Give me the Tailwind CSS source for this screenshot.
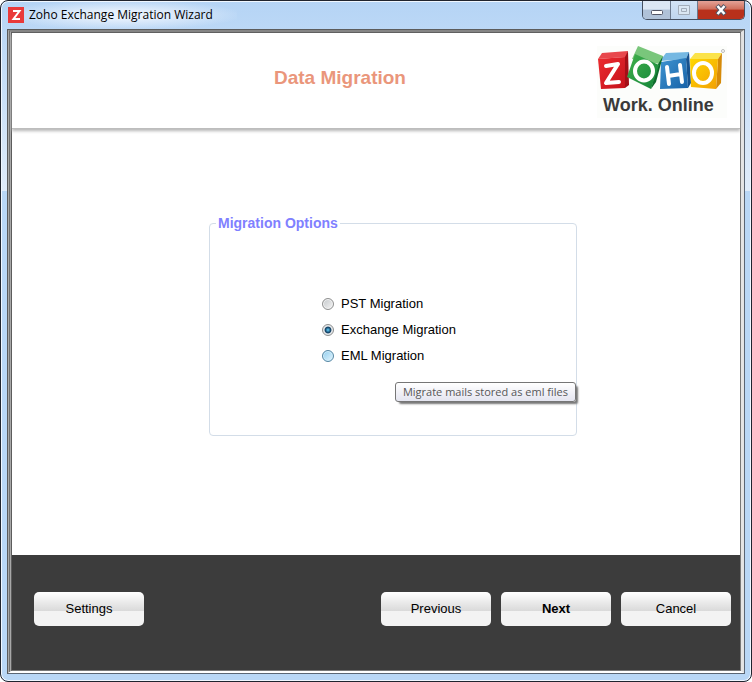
<!DOCTYPE html>
<html lang="en">
<head>
    <meta charset="UTF-8">
    <meta name="viewport" content="width=device-width, initial-scale=1.0">
    <title>Zoho Exchange Migration Wizard</title>
    <script src="https://cdn.jsdelivr.net/npm/@tailwindcss/browser@4"></script>
</head>
<body class="bg-white font-['Liberation_Sans',Arial,sans-serif] text-[13px] text-black">
    <div class="min-h-screen flex flex-col rounded-lg border border-[#20242e] bg-[#b9d7f6] bg-linear-to-b from-[#b5d4f5] from-0% via-[#e0ecfa] via-28% to-[#b9d7f6] to-28% px-[6px] pb-[7px] shadow-[inset_0_0_0_1px_#f0f7ff]">

        <!-- Title bar -->
        <div class="h-7 flex items-start justify-between">
            <div class="h-7 flex items-center gap-[5px] pl-px pr-6 bg-radial from-[#e6f0fc] from-20% to-transparent to-75%">
                <svg class="w-4 h-4" viewBox="0 0 16 16" aria-hidden="true">
                    <rect width="16" height="16" fill="#e93a3a"/>
                    <path d="M5 4h6.500L5.500 12H12" fill="none" stroke="#fff" stroke-width="2"/>
                </svg>
                <h1 class="font-['Open_Sans','Noto_Sans',sans-serif] text-[12px] leading-4">Zoho Exchange Migration Wizard</h1>
            </div>
            <div class="flex h-[19px] rounded-b-[5px] border border-t-0 border-[#454f60] overflow-hidden">
                <button aria-label="Minimize" class="w-7 border-r border-[#6c7a8e] bg-linear-to-b from-[#dce7f4] from-45% to-[#b0c2d8] to-50% flex items-center justify-center">
                    <svg class="w-3 h-5" viewBox="0 0 12 20"><rect x=".5" y="10.500" width="11" height="4" rx="1" fill="#fff" stroke="#535666"/></svg>
                </button>
                <button aria-label="Maximize" disabled class="w-[27px] border-r border-[#6c7a8e] bg-linear-to-b from-[#d3e3f5] to-[#bfd5ee] flex items-center justify-center">
                    <svg class="w-3 h-5" viewBox="0 0 12 20"><path d="M.5 5.500h11v9H.5zM3.500 8.500h5v3h-5z" fill="#dbe7f3" stroke="#a3adba"/></svg>
                </button>
                <button aria-label="Close" class="w-[46px] bg-linear-to-b from-[#e3a297] from-0% via-[#cf6f5c] via-45% to-[#b8301b] to-50% flex items-center justify-center">
                    <svg class="w-3 h-5" viewBox="0 0 12 20"><path d="M2 5.500l8 9M10 5.500l-8 9" stroke="#535666" stroke-width="4.500"/><path d="M2.500 6l7 8M9.500 6l-7 8" stroke="#fff" stroke-width="2.500"/></svg>
                </button>
            </div>
        </div>

        <!-- Bevelled client area -->
        <div class="flex-1 flex flex-col border border-t-[#5c5c5c] border-l-[#5c5c5c] border-r-[#5b6674] border-b-[#5b6674]">
            <div class="flex-1 flex flex-col border-x-3 border-y-2 [border-left-style:double] bg-[#707070] border-t-[#858585] border-l-[#a8a8a8] border-r-[#e4e4e4] border-b-white">
                <div class="flex-1 flex flex-col border border-t-[#5c5c5c] border-l-[#5c5c5c] border-r-[#777] border-b-[#777]">

                    <header class="relative z-10 h-24 flex items-start justify-between pl-[262px] pr-[13px] bg-white border-b border-[#bdbdbd] shadow-[0_2px_3px_#b5b5b5]">
                        <h2 class="pt-[33px] text-[19px] leading-6 font-bold text-[#ea967b]">Data Migration</h2>
                        <svg class="w-[130px] h-[72px] mt-[13px]" viewBox="0 0 130 72" role="img" aria-label="Zoho - Work. Online" font-family="Liberation Sans, Arial, sans-serif" font-weight="bold">
                            <defs>
                                <linearGradient id="red" x2="1" y2="1"><stop stop-color="#ec2b30"/><stop offset="1" stop-color="#c5121b"/></linearGradient>
                                <linearGradient id="green" x2="1" y2="1"><stop stop-color="#41b14c"/><stop offset="1" stop-color="#128339"/></linearGradient>
                                <linearGradient id="blue" x2="1" y2="1"><stop stop-color="#3f94d0"/><stop offset="1" stop-color="#1762a8"/></linearGradient>
                                <linearGradient id="yellow" x2="1" y2="1"><stop stop-color="#ffd800"/><stop offset="1" stop-color="#f29f05"/></linearGradient>
                            </defs>
                            <rect width="130" height="72" fill="#fcfdfb"/>
                            <!-- red cube -->
                            <path d="M1 13L5 7l26-2-2 6z" fill="#e8474c"/>
                            <path d="M28 11l3-6 1 34-4 3z" fill="#a30f17"/>
                            <path d="M1 13l27-2v31l-24 1z" fill="url(#red)"/>
                            <!-- blue cube -->
                            <path d="M63 15l6-8 23-1-3 7z" fill="#75b8e2"/>
                            <path d="M89 13l3-7 2 31-3 5z" fill="#16528f"/>
                            <path d="M64 16l25-4 2 30-28 1z" fill="url(#blue)"/>
                            <!-- green cube -->
                            <path d="M35 13L41 0l25 10-3 8z" fill="#79c67b"/>
                            <path d="M60 20l6-10-7 26-5 7z" fill="#0e6b2d"/>
                            <path d="M38 8l24 11-8 24-24-12z" fill="url(#green)"/>
                            <!-- yellow cube -->
                            <path d="M93 13l5-6h27l-4 6z" fill="#fbe34a"/>
                            <path d="M121 13l4-6-1 30-5 6z" fill="#d68a08"/>
                            <path d="M93 13h28l-2 30-25-2z" fill="url(#yellow)"/>
                            <path d="M9 20l12-2-12 19 13-1" fill="none" stroke="#fff" stroke-width="4" stroke-linecap="round" stroke-linejoin="round"/>
                            <ellipse cx="47" cy="25" rx="9" ry="9.500" fill="none" stroke="#fff" stroke-width="4"/>
                            <path d="M70 21l2 17M83 19l2 17M71 30l13-2" stroke="#fff" stroke-width="4" stroke-linecap="round"/>
                            <ellipse cx="106" cy="27" rx="9" ry="10" fill="none" stroke="#fff" stroke-width="4"/>
                            <circle cx="126" cy="5" r="1.500" fill="none" stroke="#bbb"/>
                            <text x="6" y="65" font-size="18" fill="#3a3a3a">Work. Online</text>
                        </svg>
                    </header>

                    <main class="flex-1 bg-white pt-[86px] pl-[197px] pb-8">
                        <fieldset class="relative w-[368px] rounded-[4px] border border-[#d3dde8] pt-[60px] pb-[66px] pl-[112px]">
                            <legend class="-ml-[106px] px-[2px] text-[14px] leading-4 font-bold text-[#8080ff]">Migration Options</legend>
                            <label class="flex items-center gap-[7px] leading-[26px]">
                                <input type="radio" name="source" value="pst" class="appearance-none w-3 h-3 rounded-full border border-[#8e8f8f] bg-linear-to-br from-[#c4c8cb] to-[#f4f4f4] shadow-[inset_0_0_0_1px_#f4f4f4]">
                                PST Migration
                            </label>
                            <label class="flex items-center gap-[7px] leading-[26px]">
                                <input type="radio" name="source" value="exchange" checked class="appearance-none w-3 h-3 rounded-full border border-[#8e8f8f] bg-[#e6e9eb] checked:bg-radial checked:from-[#5bc3ee] checked:from-5% checked:via-[#0d3c5f] checked:via-40% checked:to-[#e6e9eb] checked:to-55%">
                                Exchange Migration
                            </label>
                            <label class="flex items-center gap-[7px] leading-[26px]">
                                <input type="radio" name="source" value="eml" aria-describedby="eml-tip" class="appearance-none w-3 h-3 rounded-full border border-[#5586a3] bg-linear-to-br from-[#8fcdee] to-[#e3f5fd] shadow-[inset_0_0_0_1px_#d3effc]">
                                EML Migration
                            </label>
                            <div id="eml-tip" role="tooltip" class="absolute right-0 bottom-[33px] whitespace-nowrap rounded-[3px] border border-[#767676] bg-linear-to-b from-white to-[#e4e5f0] px-[7px] font-['Open_Sans','Noto_Sans',sans-serif] text-[11px] leading-[18px] text-[#575757] shadow-[3px_3px_2px_-1px_#777]">Migrate mails stored as eml files</div>
                        </fieldset>
                    </main>

                    <footer class="h-[115px] flex items-start gap-[10px] pt-[37px] pl-[22px] pr-[9px] bg-[#3c3c3c]">
                        <button class="w-[110px] h-[34px] mr-auto rounded-[5px] bg-linear-to-b from-white from-0% via-[#dadada] via-55% to-[#f3f3f3] to-55%">Settings</button>
                        <button class="w-[110px] h-[34px] rounded-[5px] bg-linear-to-b from-white from-0% via-[#dadada] via-55% to-[#f3f3f3] to-55%">Previous</button>
                        <button class="w-[110px] h-[34px] rounded-[5px] bg-linear-to-b from-white from-0% via-[#dadada] via-55% to-[#f3f3f3] to-55% font-bold">Next</button>
                        <button class="w-[110px] h-[34px] rounded-[5px] bg-linear-to-b from-white from-0% via-[#dadada] via-55% to-[#f3f3f3] to-55%">Cancel</button>
                    </footer>

                </div>
            </div>
        </div>
    </div>
</body>
</html>
